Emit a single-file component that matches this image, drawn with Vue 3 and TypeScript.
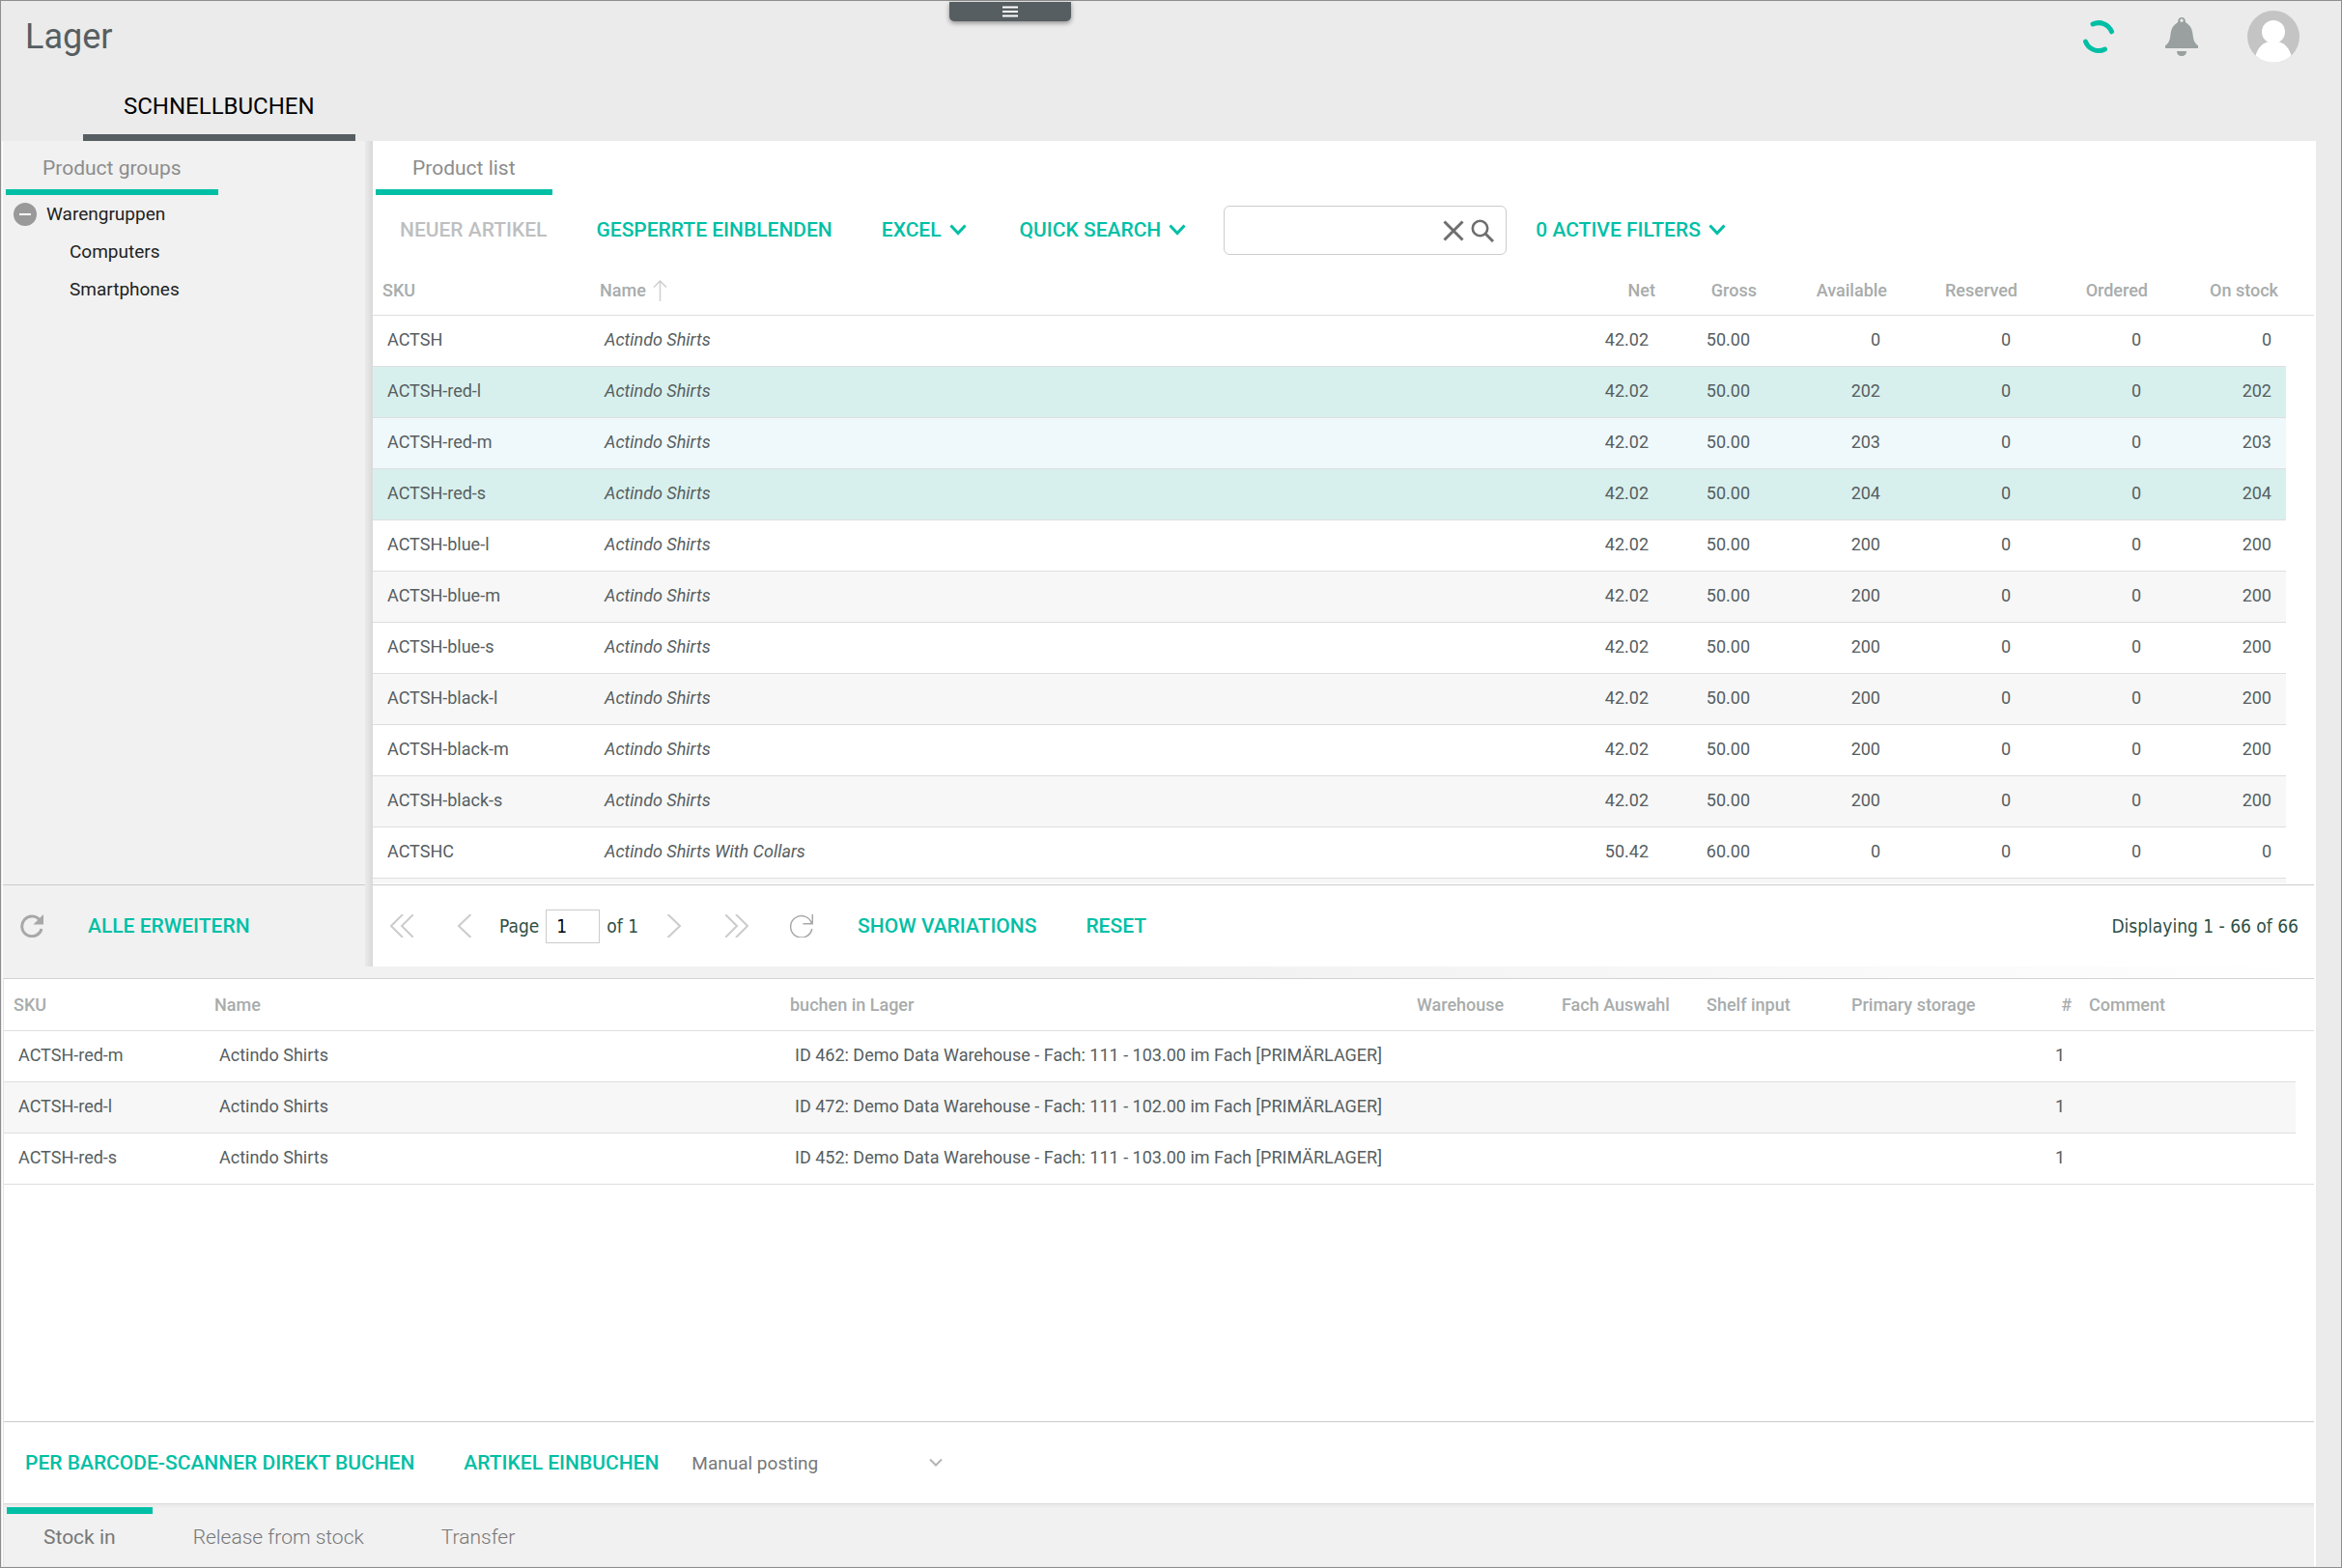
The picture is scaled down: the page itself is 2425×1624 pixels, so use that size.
<script setup lang="ts">
import { ref } from 'vue'

interface Product {
  sku: string
  name: string
  net: string
  gross: string
  stock: number
  state?: 'selected' | 'hover'
}

const colours: Array<[string, number[]]> = [
  ['blue', [200, 200, 200]],
  ['black', [200, 200, 200]],
]
const shirt = (sku: string, stock: number, state?: Product['state']): Product => ({
  sku, name: 'Actindo Shirts', net: '42.02', gross: '50.00', stock, state,
})
const products: Product[] = [
  shirt('ACTSH', 0),
  shirt('ACTSH-red-l', 202, 'selected'),
  shirt('ACTSH-red-m', 203, 'hover'),
  shirt('ACTSH-red-s', 204, 'selected'),
  ...colours.flatMap(([colour, stocks]) =>
    ['l', 'm', 's'].map((size, i) => shirt(`ACTSH-${colour}-${size}`, stocks[i]))),
  { sku: 'ACTSHC', name: 'Actindo Shirts With Collars', net: '50.42', gross: '60.00', stock: 0 },
]

const bookings = [
  { sku: 'ACTSH-red-m', target: 'ID 462: Demo Data Warehouse - Fach: 111 - 103.00 im Fach [PRIMÄRLAGER]' },
  { sku: 'ACTSH-red-l', target: 'ID 472: Demo Data Warehouse - Fach: 111 - 102.00 im Fach [PRIMÄRLAGER]' },
  { sku: 'ACTSH-red-s', target: 'ID 452: Demo Data Warehouse - Fach: 111 - 103.00 im Fach [PRIMÄRLAGER]' },
]

const page = ref('1')
const search = ref('')
</script>

<template>
  <div class="app">
    <header class="header">
      <div class="title-bar">
        <h1>Lager</h1>
        <div class="user-area">
          <svg class="spinner" viewBox="0 0 36 36" width="36" height="36" aria-hidden="true">
            <path d="M12 5A14.500 14.500 0 0 1 31.500 12.800M4.500 23.200A14.500 14.500 0 0 0 24.500 31" fill="none" stroke="#00bfa5" stroke-width="5" stroke-linecap="round" />
          </svg>
          <button class="icon-button" aria-label="Notifications">
            <svg viewBox="0 0 34 40" width="34" height="40">
              <path fill-rule="evenodd" fill="#99a09f" d="M17 0c2.200 0 3.800 1.600 3.800 3.600 0 .8 0 1.400.6 1.900 4.400 2.500 6.500 6.500 7 11.500.8 6.500 1.600 9.500 5.600 12.200V32H0v-2.800C4 26.500 4.800 23.500 5.600 17c.5-5 2.600-9 7-11.500.6-.5.6-1.100.6-1.900C13.200 1.600 14.800 0 17 0zm0 1.500a1.700 1.700 0 0 0 0 3.400 1.700 1.700 0 0 0 0-3.400zM12 35h10c0 3-2 5-5 5s-5-2-5-5z" />
            </svg>
          </button>
          <button class="icon-button" aria-label="User account">
            <svg viewBox="0 0 54 54" width="54" height="54">
              <circle cx="27" cy="27" r="27" fill="#c4c4c4" />
              <circle cx="27" cy="22" r="12" fill="#fff" />
              <path d="M8.500 46.500c2-7 6-12 12-14h13c6 2 10 7 12 14a27 27 0 0 1-37 0z" fill="#fff" />
            </svg>
          </button>
        </div>
      </div>
      <button class="menu-pull" aria-label="Menu">
        <svg viewBox="0 0 16 12" width="16" height="12"><path d="M0 1.500h16M0 6h16M0 10.500h16" stroke="#fff" stroke-width="2" /></svg>
      </button>
      <nav class="main-tabs"><button class="main-tab">SCHNELLBUCHEN</button></nav>
    </header>

    <main class="main">
      <section class="upper">
        <aside class="groups">
          <div class="tabs"><button class="tab active">Product groups</button></div>
          <ul class="tree">
            <li>
              <svg viewBox="0 0 24 24" width="24" height="24" aria-hidden="true">
                <circle cx="12" cy="12" r="12" fill="#999" /><path d="M6 12h12" stroke="#fff" stroke-width="2" />
              </svg>
              Warengruppen
            </li>
            <li class="child">Computers</li>
            <li class="child">Smartphones</li>
          </ul>
          <div class="bar groups-bar">
            <button class="icon-button" aria-label="Reload groups">
              <svg viewBox="0 0 24 24" width="24" height="24">
                <path d="M20.500 6.500A10.300 10.300 0 1 0 22 15" fill="none" stroke="#a8a8a8" stroke-width="3" /><path d="M24 0v10.500H13.500z" fill="#a8a8a8" />
              </svg>
            </button>
            <button class="action">ALLE ERWEITERN</button>
          </div>
        </aside>
        <div class="splitter"></div>

        <section class="list">
          <div class="tabs"><button class="tab active">Product list</button></div>
          <div class="toolbar">
            <button class="action" disabled>NEUER ARTIKEL</button>
            <button class="action">GESPERRTE EINBLENDEN</button>
            <button class="action drop">EXCEL
              <svg viewBox="0 0 18 12" width="18" height="12"><path d="M1.500 1.500 9 9.500l7.500-8" /></svg>
            </button>
            <button class="action drop">QUICK SEARCH
              <svg viewBox="0 0 18 12" width="18" height="12"><path d="M1.500 1.500 9 9.500l7.500-8" /></svg>
            </button>
            <div class="search">
              <input v-model="search" type="text" aria-label="Search products" />
              <button class="icon-button" aria-label="Clear search">
                <svg viewBox="0 0 22 22" width="22" height="22"><path d="M1.500 1.500l19 19M20.500 1.500l-19 19" stroke="#6e6e6e" stroke-width="3" /></svg>
              </button>
              <button class="icon-button" aria-label="Start search">
                <svg viewBox="0 0 24 24" width="24" height="24" fill="none" stroke="#6e6e6e"><circle cx="9.500" cy="9.500" r="7.700" stroke-width="2.600" /><path d="M15 15l8 8" stroke-width="3" /></svg>
              </button>
            </div>
            <button class="action drop">0 ACTIVE FILTERS
              <svg viewBox="0 0 18 12" width="18" height="12"><path d="M1.500 1.500 9 9.500l7.500-8" /></svg>
            </button>
          </div>

          <div class="grid">
            <table class="products">
              <thead>
                <tr>
                  <th class="c-sku">SKU</th>
                  <th>
                    <span class="sorted">Name
                      <svg viewBox="0 0 15 22" width="15" height="22" aria-hidden="true"><path d="M7.500 22V1M1 7.500 7.500 1 14 7.500" fill="none" stroke="#d0d0d0" stroke-width="1.500" /></svg>
                    </span>
                  </th>
                  <th class="num c-net">Net</th>
                  <th class="num c-gross">Gross</th>
                  <th class="num c-qty">Available</th>
                  <th class="num c-qty">Reserved</th>
                  <th class="num c-qty">Ordered</th>
                  <th class="num c-qty">On stock</th>
                  <th class="c-scroll"></th>
                </tr>
              </thead>
              <tbody>
                <tr v-for="p in products" :key="p.sku" :class="p.state">
                  <td>{{ p.sku }}</td>
                  <td class="italic">{{ p.name }}</td>
                  <td class="num">{{ p.net }}</td>
                  <td class="num">{{ p.gross }}</td>
                  <td class="num">{{ p.stock }}</td>
                  <td class="num">0</td>
                  <td class="num">0</td>
                  <td class="num">{{ p.stock }}</td>
                  <td class="gutter"></td>
                </tr>
                <tr class="peek"><td colspan="8"></td><td class="gutter"></td></tr>
              </tbody>
            </table>
          </div>

          <div class="bar pager">
            <button class="icon-button" aria-label="First page">
              <svg class="arrow" viewBox="0 0 24 24" width="24" height="24"><path d="M13 0 1 12l12 12M24 0 12 12l12 12" /></svg>
            </button>
            <button class="icon-button prev" aria-label="Previous page">
              <svg class="arrow" viewBox="0 0 14 24" width="14" height="24"><path d="M13.500 0 1 12l12.500 12" /></svg>
            </button>
            <label class="page">Page <input v-model="page" type="text" /> of 1</label>
            <button class="icon-button next" aria-label="Next page">
              <svg class="arrow" viewBox="0 0 14 24" width="14" height="24"><path d="M.5 0 13 12 .5 24" /></svg>
            </button>
            <button class="icon-button last" aria-label="Last page">
              <svg class="arrow" viewBox="0 0 24 24" width="24" height="24"><path d="M0 0l12 12L0 24M11 0l12 12-12 12" /></svg>
            </button>
            <button class="icon-button" aria-label="Reload list">
              <svg viewBox="0 0 24 24" width="24" height="24"><path d="M23.300 0v9.800H13.500M22.500 9.500A11.200 11.200 0 1 0 22.800 15" fill="none" stroke="#a8a8a8" stroke-width="1.500" /></svg>
            </button>
            <button class="action variations">SHOW VARIATIONS</button>
            <button class="action">RESET</button>
            <span class="displaying">Displaying 1 - 66 of 66</span>
          </div>
        </section>
      </section>

      <div class="row-splitter"></div>

      <section class="lower">
        <table class="bookings">
          <thead>
            <tr>
              <th class="b-sku">SKU</th>
              <th class="b-name">Name</th>
              <th>buchen in Lager</th>
              <th class="b-mid">Warehouse</th>
              <th class="b-mid">Fach Auswahl</th>
              <th class="b-mid">Shelf input</th>
              <th class="b-mid">Primary storage</th>
              <th class="b-count num">#</th>
              <th class="b-comment">Comment</th>
              <th class="b-scroll"></th>
            </tr>
          </thead>
          <tbody>
            <tr v-for="b in bookings" :key="b.sku">
              <td>{{ b.sku }}</td>
              <td>Actindo Shirts</td>
              <td>{{ b.target }}</td>
              <td></td><td></td><td></td><td></td>
              <td class="num">1</td>
              <td></td>
              <td class="gutter"></td>
            </tr>
          </tbody>
        </table>
        <div class="lower-space"></div>
        <div class="booking-bar">
          <button class="action">PER BARCODE-SCANNER DIREKT BUCHEN</button>
          <button class="action">ARTIKEL EINBUCHEN</button>
          <div class="mode">
            <select aria-label="Posting mode"><option>Manual posting</option></select>
            <svg viewBox="0 0 14 10" width="14" height="10" aria-hidden="true"><path d="M1 1.500l6 6 6-6" fill="none" stroke="#b4b4b4" stroke-width="2" /></svg>
          </div>
        </div>
        <nav class="bottom-tabs">
          <button class="tab current">Stock in</button>
          <button class="tab">Release from stock</button>
          <button class="tab">Transfer</button>
        </nav>
      </section>
    </main>
  </div>
</template>

<style>
body {
  background: #ebebeb;
}
</style>

<style scoped>
* {
  box-sizing: border-box;
}
.app {
  position: relative;
  display: flex;
  flex-direction: column;
  min-height: 100vh;
  border: 1px solid #8e8e8e;
  background: #ebebeb;
  font-family: Roboto, sans-serif;
  font-size: 18px;
  color: #565e61;
}
button {
  margin: 0;
  padding: 0;
  border: 0;
  background: none;
  font: inherit;
  color: inherit;
  white-space: nowrap;
}
svg {
  display: block;
  flex: none;
}
.icon-button {
  flex: none;
}

/* header */
.header {
  height: 145px;
  display: flex;
  flex-direction: column;
  justify-content: space-between;
}
.title-bar {
  display: flex;
  justify-content: space-between;
  align-items: center;
  height: 74px;
  padding: 0 43px 0 25px;
}
h1 {
  margin: 0;
  font-size: 36px;
  font-weight: 400;
}
.user-area {
  display: flex;
  align-items: center;
  gap: 51px;
}
.menu-pull {
  position: absolute;
  top: 1px;
  left: calc(50% - 230px);
  display: flex;
  justify-content: center;
  align-items: center;
  width: 126px;
  height: 20px;
  border-radius: 0 0 5px 5px;
  background: #565e61;
  box-shadow: 0 2px 5px rgba(0, 0, 0, 0.4);
}
.main-tabs {
  padding-left: 85px;
}
.main-tab {
  height: 71px;
  padding: 6px 42px 0;
  border-bottom: 7px solid #565e61;
  font-size: 24px;
  color: #000;
}

/* page frame */
.main {
  flex: 1;
  display: flex;
  flex-direction: column;
  margin: 0 26px 1px 1px;
  padding-left: 1px;
  background: #fff;
}
.upper {
  display: flex;
}
.groups {
  flex: none;
  width: 375px;
  display: flex;
  flex-direction: column;
  background: #f1f1f1;
}
.splitter {
  flex: none;
  width: 8px;
  background: linear-gradient(to right, #ebebeb, #d8d8d8);
}
.list {
  flex: 1;
  min-width: 0;
}
.tabs {
  padding-left: 3px;
}
.tab {
  height: 56px;
  padding: 6px 38px 0;
  font-size: 21px;
  font-weight: 300;
  color: #777;
}
.tab.active {
  border-bottom: 6px solid #00bfa5;
  font-weight: 400;
  color: #8c8c8c;
}
.tree {
  flex: 1;
  margin: 0;
  padding: 0 11px;
  list-style: none;
  font-size: 19px;
  line-height: 39px;
  color: #222;
}
.tree li {
  display: flex;
  align-items: center;
  gap: 10px;
}
.tree .child {
  padding-left: 58px;
}
.bar {
  display: flex;
  align-items: center;
  height: 85px;
  border-top: 1px solid #ccc;
}
.groups-bar {
  gap: 46px;
  padding-left: 18px;
}

/* buttons */
.action {
  flex: none;
  font-size: 21px;
  font-weight: 500;
  color: #00bfa5;
}
.action:disabled {
  color: #bfbfbf;
}
.drop {
  display: flex;
  align-items: center;
  gap: 8px;
}
.drop svg {
  fill: none;
  stroke: #00bfa5;
  stroke-width: 3;
}
.toolbar {
  display: flex;
  align-items: center;
  height: 73px;
  padding-left: 28px;
}
.toolbar > .action {
  margin-right: 51px;
  padding-bottom: 2px;
}
.toolbar > .drop {
  margin-right: 55px;
}
.search {
  display: flex;
  align-items: center;
  gap: 7px;
  width: 293px;
  height: 51px;
  margin: 0 30px 0 -16px;
  padding-right: 12px;
  border: 1px solid #ccc;
  border-radius: 6px;
}
.search input {
  flex: 1;
  min-width: 0;
  height: 100%;
  padding: 0 10px;
  border: 0;
  background: none;
  outline: 0;
  font: inherit;
}

/* tables */
table {
  width: 100%;
  table-layout: fixed;
  border-spacing: 0;
}
th {
  height: 52px;
  padding: 0 8px 0 10px;
  border-bottom: 1px solid #dedede;
  font-weight: 500;
  text-align: left;
  white-space: nowrap;
  color: #a8acac;
}
td {
  height: 53px;
  padding: 0 15px 4px;
  border-bottom: 1px solid #dedede;
  white-space: nowrap;
}
.num {
  text-align: right;
}
.italic {
  font-style: italic;
}
tbody tr:nth-child(even) {
  background: #f7f7f7;
}
tbody tr.selected {
  background: #d8f0ed;
}
tbody tr.hover {
  background: #eff8fa;
}
td.gutter {
  padding: 0;
  border: 0;
  background: #fff;
}
.sorted {
  display: flex;
  align-items: center;
  gap: 7px;
}
.grid {
  padding-right: 2px;
}
.c-sku {
  width: 225px;
}
.c-net,
.c-gross {
  width: 105px;
}
.c-qty {
  width: 135px;
}
.c-scroll {
  width: 29px;
}
.peek td {
  height: 5px;
  padding: 0;
  border: 0;
}

/* pager */
.pager {
  margin: 1px 2px 0 0;
  padding: 0 16px 0 18px;
}
.arrow {
  fill: none;
  stroke: #ccc;
  stroke-width: 2;
}
.prev {
  margin: 0 29px 0 46px;
}
.page {
  display: flex;
  align-items: center;
  gap: 7px;
}
.page,
.displaying {
  font-family: "DejaVu Sans Condensed", "DejaVu Sans", sans-serif;
  font-size: 19px;
  color: #2f4f45;
}
.page input {
  width: 56px;
  height: 35px;
  padding: 0 10px;
  border: 1px solid #ccc;
  border-radius: 0;
  font: inherit;
  color: #000;
}
.next {
  margin-left: 30px;
}
.last {
  margin: 0 43px 0 46px;
}
.variations {
  margin: 0 51px 0 46px;
}
.displaying {
  margin-left: auto;
}
.row-splitter {
  height: 12px;
  background: linear-gradient(to right, #f1f1f1 50%, #fff);
}

/* bookings */
.lower {
  flex: 1;
  display: flex;
  flex-direction: column;
  margin-right: 2px;
  border-top: 1px solid #d2d2d2;
  border-left: 1px solid #e4e4e4;
}
.bookings th {
  height: 54px;
}
.bookings .gutter {
  padding: 0;
}
.bookings tr:last-child .gutter {
  border-bottom: 1px solid #dedede;
}
.b-sku {
  width: 208px;
}
.b-name {
  width: 596px;
}
.b-mid {
  width: 150px;
}
.b-count {
  width: 96px;
}
.b-comment {
  width: 224px;
}
.b-scroll {
  width: 19px;
}
.lower-space {
  flex: 1;
}
.booking-bar {
  display: flex;
  align-items: center;
  gap: 51px;
  height: 85px;
  padding-left: 22px;
  border-top: 1px solid #ccc;
}
.mode {
  display: flex;
  align-items: center;
  margin-left: -17px;
}
.mode select {
  width: 260px;
  height: 45px;
  margin-right: -14px;
  padding: 0;
  border: 0;
  outline: 0;
  appearance: none;
  background: none;
  font: inherit;
  font-size: 19px;
  color: #777;
}
.mode svg {
  pointer-events: none;
}
.bottom-tabs {
  display: flex;
  gap: 4px;
  padding: 0 0 1px 3px;
  border-top: 1px solid #d8d8d8;
  background: #f1f1f1;
  box-shadow: inset 0 3px #ebebeb;
}
.bottom-tabs .tab {
  height: 60px;
  margin-top: 3px;
  padding-top: 0;
  padding-bottom: 5px;
  border-top: 7px solid transparent;
}
.bottom-tabs .current {
  border-top-color: #00bfa5;
  font-weight: 400;
}
</style>
